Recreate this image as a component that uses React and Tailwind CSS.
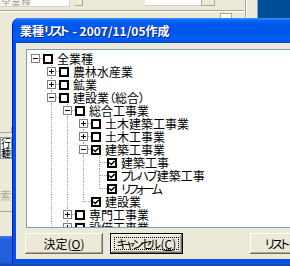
import React from "react";

const rows = [
  { level: 0, label: "全業種", exp: "-", cells: ["root"] },
  { level: 1, label: "農林水産業", exp: "+", cells: ["none", "tee"] },
  { level: 1, label: "鉱業", exp: "+", cells: ["none", "tee"] },
  { level: 1, label: "建設業（総合）", exp: "-", cells: ["none", "tee"] },
  { level: 2, label: "総合工事業", exp: "-", cells: ["none", "pipe", "tee"] },
  { level: 3, label: "土木建築工事業", exp: "+", cells: ["none", "pipe", "pipe", "tee"] },
  { level: 3, label: "土木工事業", exp: "+", cells: ["none", "pipe", "pipe", "tee"] },
  { level: 3, label: "建築工事業", exp: "-", checked: true, cells: ["none", "pipe", "pipe", "tee"] },
  { level: 4, label: "建築工事", checked: true, cells: ["none", "pipe", "pipe", "pipe", "tee"] },
  { level: 4, label: "プレハブ建築工事", checked: true, cells: ["none", "pipe", "pipe", "pipe", "tee"] },
  { level: 4, label: "リフォーム", checked: true, cells: ["none", "pipe", "pipe", "pipe", "elbow"] },
  { level: 3, label: "建設業", checked: true, cells: ["none", "pipe", "pipe", "elbow"] },
  { level: 2, label: "専門工事業", exp: "+", cells: ["none", "pipe", "tee"] },
  { level: 2, label: "設備工事業", exp: "+", cells: ["none", "pipe", "tee"] },
];

// katakana in the old UI font is much narrower than the kanji
function Narrow({ text, cls }) {
  const parts = text.split(/([ァ-ヶー]+)/);
  return parts.map((p, i) =>
    /^[ァ-ヶー]+$/.test(p) ? (
      <span key={i} className={cls}>
        {p}
      </span>
    ) : (
      <React.Fragment key={i}>{p}</React.Fragment>
    )
  );
}

function Cell({ type, exp }) {
  return (
    <span className="relative block w-[16px] h-[13px] shrink-0">
      {(type === "pipe" || type === "tee") && (
        <span className="absolute left-[8px] top-0 h-[13px] border-l border-dotted border-[#a0a0a0]" />
      )}
      {type === "elbow" && (
        <span className="absolute left-[8px] top-0 h-[7px] border-l border-dotted border-[#a0a0a0]" />
      )}
      {(type === "tee" || type === "elbow" || type === "root") && (
        <span className="absolute left-[8px] top-[6px] w-[8px] border-t border-dotted border-[#a0a0a0]" />
      )}
      {exp && (
        <span className="absolute left-[4px] top-[2px] w-[9px] h-[9px] border border-[#808080] bg-white">
          <span className="absolute left-[1px] top-[3px] w-[5px] h-px bg-black" />
          {exp === "+" && <span className="absolute left-[3px] top-[1px] w-px h-[5px] bg-black" />}
        </span>
      )}
    </span>
  );
}

function CheckBox({ checked }) {
  return (
    <span className="relative block w-[10px] h-[10px] border-2 border-black bg-white shrink-0">
      {checked && (
        <svg className="absolute left-0 top-0" width="6" height="6" viewBox="0 0 6 6">
          <path d="M0.3 2.6 L2.2 4.5 L5.7 0.9" stroke="#000" strokeWidth="1.5" fill="none" />
        </svg>
      )}
    </span>
  );
}

function TreeRow({ row }) {
  return (
    <div className="flex items-center h-[13px]">
      {row.cells.map((c, i) => (
        <Cell key={i} type={c} exp={i === row.level ? row.exp : null} />
      ))}
      <CheckBox checked={row.checked} />
      <span className="block h-[13px] ml-[4px] text-[12px] leading-[13px] text-black whitespace-nowrap">
        <Narrow text={row.label} cls="tracking-[-2.5px] mr-[2px]" />
      </span>
    </div>
  );
}

function ClassicButton({ children, width, focused }) {
  return (
    <div
      className={`relative flex items-center justify-center h-[21px] shrink-0 bg-[#ece9d8] text-[12px] leading-none text-black whitespace-nowrap ${
        focused
          ? "border border-black shadow-[inset_-1px_-1px_0_#716f64,inset_1px_1px_0_#fff,inset_-2px_-2px_0_#aca899]"
          : "shadow-[inset_-1px_-1px_0_#716f64,inset_1px_1px_0_#fff,inset_-2px_-2px_0_#aca899]"
      }`}
      style={{ width }}
    >
      {focused && <span className="absolute inset-[3px] border border-dotted border-black" />}
      {children}
    </div>
  );
}

export default function App() {
  return (
    <div className="relative w-[290px] h-[266px] overflow-hidden bg-[#004e98] font-['Noto_Sans_CJK_JP',sans-serif] [font-feature-settings:'palt']">
      {/* parent window behind */}
      <div className="absolute left-0 top-0 w-[258px] h-[240px] bg-[#ece9d8] border-r border-[#8c9fd8]">
        <div className="flex items-start h-[8px]">
          <div className="w-[70px] h-[7px] bg-white border-b border-r border-[#d4d0c8] text-[10px] leading-[4px] text-[#aca899] pl-[1px] overflow-hidden">全業種</div>
          <div className="ml-[5px] w-[8px] h-[6px] border-b border-r border-[#aca899]" />
          <div className="ml-[62px] w-[70px] h-[6px] bg-white border-b border-[#d4d0c8] flex justify-end">
            <div className="w-[14px] h-[6px] bg-[#ece9d8] border-b border-r border-l border-[#aca899]" />
          </div>
        </div>
        <div className="mt-[2px] w-[244px] border-t border-[#aca899] border-b border-b-white" />
        <div className="flex">
          <div className="ml-[220px] mt-[1px] w-[12px] h-[8px] border border-[#aca899] bg-white" />
          <div className="ml-[13px] -mt-[12px] w-[2px] h-[30px] border-l border-[#aca899] border-r border-r-white" />
        </div>
        <div className="mt-[97px] w-[12px] h-[6px] border-b border-r border-[#aca899]" />
        <div className="mt-[4px] w-[12px] h-[22px] bg-white border border-[#7f9db9] text-[10px] text-black overflow-hidden">
          <div className="h-[10px] leading-[10px]">行1</div>
          <div className="h-[10px] leading-[10px]">種</div>
        </div>
        <div className="mt-[30px] h-[12px] text-[11px] leading-[12px] text-[#aca899]">索</div>
        <div className="mt-[10px] w-[12px] border-t border-[#aca899]" />
      </div>

      {/* taskbar */}
      <div className="absolute left-0 bottom-0 w-full h-[30px] bg-[linear-gradient(to_bottom,#3c81f3_0%,#245edb_12%,#245edb_85%,#1941a5_100%)]" />

      {/* dialog window */}
      <div className="absolute left-[12px] top-[18px] w-[300px] h-[245px] flex flex-col rounded-t-[7px] overflow-hidden bg-[#0054e3] border-l border-[#0019cf]">
        <div className="h-[25px] shrink-0 flex items-center pl-[7px] bg-[linear-gradient(to_bottom,#3d95ff_0%,#0a66f5_10%,#0058ee_25%,#0055e5_55%,#0060f8_85%,#0050e0_94%,#0040c8_100%)]">
          <span className="text-white text-[12px] font-bold [text-shadow:1px_1px_0_#0a1e8a] whitespace-nowrap">
            <Narrow text="業種リスト" cls="tracking-[-3px] mr-[3px]" /> - 2007/11/05作成
          </span>
        </div>
        <div className="flex-1 ml-[3px] mb-[4px] bg-[#ece9d8] flex flex-col pt-[6px] pl-[10px]">
          <div className="h-[179px] bg-white border border-[#7f9db9] pt-[2px] overflow-hidden">
            {rows.map((r, i) => (
              <TreeRow key={i} row={r} />
            ))}
          </div>
          <div className="mt-[5px] flex items-center -ml-[1px]">
            <ClassicButton width={78}>
              決定(<span className="underline">O</span>)
            </ClassicButton>
            <div className="ml-[7px]">
              <ClassicButton width={73} focused>
                <span className="tracking-[-2.5px] mr-[2px]">キャンセル</span>(<span className="underline">C</span>)
              </ClassicButton>
            </div>
            <div className="ml-[67px]">
              <ClassicButton width={78}>
                <span className="tracking-[-2.5px] mr-[2px]">リスト</span>作成
              </ClassicButton>
            </div>
          </div>
        </div>
      </div>
    </div>
  );
}
